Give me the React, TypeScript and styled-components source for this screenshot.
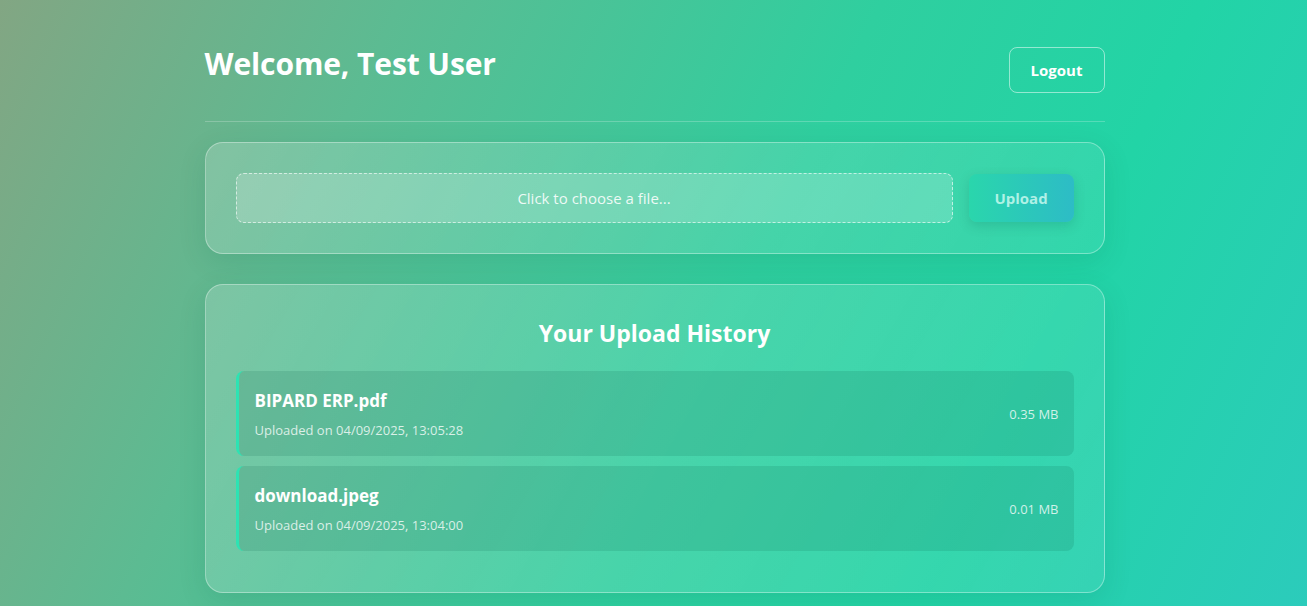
import styled, { createGlobalStyle } from "styled-components";

const Global = createGlobalStyle`
  html, body {
    margin: 0;
    padding: 0;
  }
  body {
    font-family: "Segoe UI", "Open Sans", "Noto Sans", sans-serif;
    min-height: 606px;
    background: linear-gradient(115deg, #82a683 0%, #5cbb92 25%, #2fcf9f 55%, #22d4a6 75%, #2ccbbc 100%);
    color: #fff;
  }
`;

const Page = styled.div`
  width: 900px;
  margin: 0 auto;
  padding: 40px 0 14px;
  transform: translateX(1px);
`;

const Header = styled.header`
  display: flex;
  justify-content: space-between;
  align-items: flex-start;
  padding-bottom: 28px;
  border-bottom: 1px solid rgba(255, 255, 255, 0.22);
  margin-bottom: 20px;
`;

const Title = styled.h1`
  margin: 0;
  font-size: 30px;
  font-weight: 700;
  line-height: 48px;
  letter-spacing: -0.1px;
`;

const GhostButton = styled.button`
  margin-top: 7px;
  width: 96px;
  height: 46px;
  border-radius: 8px;
  border: 1px solid rgba(255, 255, 255, 0.5);
  background: transparent;
  color: #fff;
  font: 700 15px "Segoe UI", "Open Sans", "Noto Sans", sans-serif;
  cursor: pointer;
`;

const Card = styled.section<{ $pad?: string }>`
  background: linear-gradient(120deg, rgba(255, 255, 255, 0.18), rgba(255, 255, 255, 0.07));
  border: 1px solid rgba(255, 255, 255, 0.35);
  border-radius: 18px;
  padding: ${({ $pad }) => $pad || "30px"};
  box-shadow: 0 8px 28px rgba(0, 80, 60, 0.12);
  margin-bottom: 30px;
`;

const UploadRow = styled.div`
  display: flex;
  gap: 16px;
  align-items: center;
`;

const FilePicker = styled.label`
  flex: 1;
  height: 48px;
  display: flex;
  align-items: center;
  justify-content: center;
  border: 1px dashed rgba(255, 255, 255, 0.6);
  border-radius: 8px;
  background: rgba(255, 255, 255, 0.18);
  color: rgba(255, 255, 255, 0.88);
  font-size: 15px;
  cursor: pointer;
`;

const PrimaryButton = styled.button`
  width: 105px;
  height: 48px;
  border: none;
  border-radius: 8px;
  background: linear-gradient(90deg, #2ad6ac, #2dbcc6);
  color: rgba(220, 255, 245, 0.75);
  font: 700 15px "Segoe UI", "Open Sans", "Noto Sans", sans-serif;
  box-shadow: 0 4px 12px rgba(0, 90, 80, 0.18);
  cursor: pointer;
`;

const SectionTitle = styled.h2`
  margin: 0 0 18px;
  text-align: center;
  font-size: 23px;
  font-weight: 700;
  line-height: 40px;
`;

const List = styled.ul`
  list-style: none;
  margin: 0;
  padding: 0;
  display: flex;
  flex-direction: column;
  gap: 10px;
`;

const Item = styled.li`
  display: flex;
  align-items: center;
  justify-content: space-between;
  height: 85px;
  box-sizing: border-box;
  padding: 0 15px 0 16px;
  border-radius: 8px;
  border-left: 3px solid #2de3b3;
  background: rgba(10, 90, 70, 0.14);
`;

const FileName = styled.div`
  font-size: 17px;
  font-weight: 700;
  margin-bottom: 9px;
`;

const Meta = styled.div`
  font-size: 13px;
  color: rgba(255, 255, 255, 0.78);
`;

const uploads = [
  { name: "BIPARD ERP.pdf", date: "04/09/2025, 13:05:28", size: "0.35 MB" },
  { name: "download.jpeg", date: "04/09/2025, 13:04:00", size: "0.01 MB" },
];

export default function App() {
  return (
    <>
      <Global />
      <Page>
        <Header>
          <Title>Welcome, Test User</Title>
          <GhostButton>Logout</GhostButton>
        </Header>

        <Card>
          <UploadRow>
            <FilePicker>Click to choose a file...</FilePicker>
            <PrimaryButton>Upload</PrimaryButton>
          </UploadRow>
        </Card>

        <Card $pad="28px 30px 41px">
          <SectionTitle>Your Upload History</SectionTitle>
          <List>
            {uploads.map((u) => (
              <Item key={u.name}>
                <div>
                  <FileName>{u.name}</FileName>
                  <Meta>Uploaded on {u.date}</Meta>
                </div>
                <Meta>{u.size}</Meta>
              </Item>
            ))}
          </List>
        </Card>
      </Page>
    </>
  );
}
